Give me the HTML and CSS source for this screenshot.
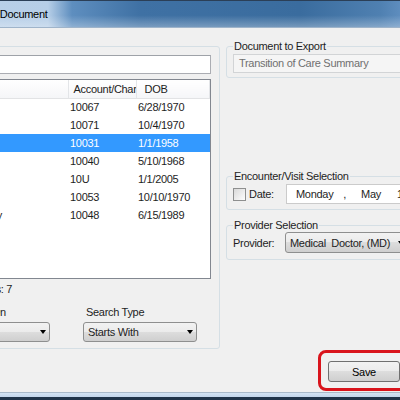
FILE: index.html
```html
<!DOCTYPE html>
<html lang="en">

<head>
    <meta charset="UTF-8" />
    <title>Export Document</title>
    <link rel="stylesheet" href="styles.css">
</head>

<body>
    <div class="window">
        <div class="titlebar"><span class="title">Export Document</span></div>

        <div class="dialog">
            <fieldset class="group search-group">
                <legend>Patient Search</legend>
                <input class="search-box" type="text" value="" />
                <div class="listview">
                    <table>
                        <colgroup>
                            <col class="c-name">
                            <col class="c-acct">
                            <col class="c-dob">
                        </colgroup>
                        <thead>
                            <tr>
                                <th class="h-name">Patient Name</th>
                                <th class="h-acct">Account/Chart #</th>
                                <th class="h-dob">DOB</th>
                            </tr>
                        </thead>
                        <tbody>
                            <tr><td class="name">Smith, John</td><td>10067</td><td>6/28/1970</td></tr>
                            <tr><td class="name">Miller, Jo</td><td>10071</td><td>10/4/1970</td></tr>
                            <tr class="selected"><td class="name">Test, Patient</td><td>10031</td><td>1/1/1958</td></tr>
                            <tr><td class="name">Brown, Mary</td><td>10040</td><td>5/10/1968</td></tr>
                            <tr><td class="name">Baby, Boy</td><td>10U</td><td>1/1/2005</td></tr>
                            <tr><td class="name">Green, Tom</td><td>10053</td><td>10/10/1970</td></tr>
                            <tr><td class="name">Anderson, Nancy</td><td>10048</td><td>6/15/1989</td></tr>
                        </tbody>
                    </table>
                </div>
                <div class="records">Records: 7</div>
                <div class="search-row">
                    <div class="field field-on">
                        <label>Search On</label>
                        <div class="combo"><span>Name</span><span class="arrow"></span></div>
                    </div>
                    <div class="field field-type">
                        <label>Search Type</label>
                        <div class="combo"><span>Starts With</span><span class="arrow"></span></div>
                    </div>
                </div>
            </fieldset>

            <div class="side">
                <fieldset class="group doc-group">
                    <legend>Document to Export</legend>
                    <div class="textbox">Transition of Care Summary</div>
                </fieldset>

                <fieldset class="group enc-group">
                    <legend>Encounter/Visit Selection</legend>
                    <div class="row">
                        <span class="check"></span>
                        <span class="lbl date-lbl">Date:</span>
                        <div class="datebox">
                            <span>Monday</span><span class="sep">,</span><span class="month">May</span><span class="day">13, 2013</span>
                        </div>
                    </div>
                </fieldset>

                <fieldset class="group prov-group">
                    <legend>Provider Selection</legend>
                    <div class="row">
                        <span class="lbl prov-lbl">Provider:</span>
                        <div class="combo wide"><span>Medical&nbsp; Doctor, (MD)</span><span class="arrow"></span></div>
                    </div>
                </fieldset>
            </div>
        </div>

        <div class="footer">
            <div class="highlight">
                <button class="btn">Save</button>
            </div>
        </div>
        <div class="frame-bottom"></div>
    </div>
</body>

</html>
```

FILE: styles.css
```css
* {
    margin: 0px;
    padding: 0px;
    box-sizing: border-box;
}

html,
body {
    width: 400px;
    height: 400px;
    overflow: hidden;
}

body {
    background: #f0f0f0;
    font-family: "Liberation Sans", Arial, sans-serif;
    font-size: 11px;
    letter-spacing: -0.3px;
    color: #1e1e1e;
}

/* the dialog is wider than the shot, its left part is cut off */
.window {
    width: 520px;
    height: 400px;
    margin-left: -100px;
    display: flex;
    flex-direction: column;
}

.titlebar {
    height: 28px;
    flex-shrink: 0;
    display: flex;
    align-items: center;
    padding-left: 67px;
    border-top: 1px solid #2b3f57;
    border-bottom: 1px solid #9fb4ca;
    background-image:
        linear-gradient(180deg, rgba(255, 255, 255, 0) 55%, rgba(255, 255, 255, 0.3) 100%),
        linear-gradient(90deg, #bcd2ea 0, #b6cee7 148px, #5e8ebf 172px, #3f71a4 240px, #3a6c9e 400px, #4f80b1 480px, #6d9acb 520px);
}

.title {
    color: #000;
}

.dialog {
    display: flex;
    gap: 6px;
    padding: 12px 0 0 6px;
}

.group {
    border: 1px solid #d5dfe5;
    border-radius: 3px;
    padding: 0 6px;
}

.group legend {
    padding: 0 1px;
    line-height: 13px;
}

.search-group {
    width: 314px;
    height: 309px;
    flex-shrink: 0;
    padding: 2px 8px 0;
}

.search-box {
    display: block;
    width: 100%;
    height: 19px;
    border: 1px solid #abadb3;
    border-top-color: #9ea2a8;
    background: #fff;
}

.listview {
    margin-top: 5px;
    height: 200px;
    border: 1px solid #828790;
    background: #fff;
    overflow: hidden;
}

.listview table {
    width: 100%;
    border-collapse: collapse;
    table-layout: fixed;
}

.c-name {
    width: 152px;
}

.c-acct {
    width: 68px;
}

.listview th {
    height: 18px;
    font-weight: normal;
    text-align: left;
    color: #222;
    white-space: nowrap;
    overflow: hidden;
    background: linear-gradient(#ffffff, #f5f6f8);
    border-right: 1px solid #e3e5e8;
    border-bottom: 1px solid #e2e3e5;
}

.h-name {
    padding-left: 6px;
}

.h-acct {
    padding-left: 5px;
}

.h-dob {
    padding-left: 8px;
}

.listview td {
    height: 18px;
    padding-left: 2px;
    white-space: nowrap;
    overflow: hidden;
}

.listview td.name {
    padding-left: 6px;
}

.listview tr.selected td {
    background: #3399ff;
    color: #fff;
}

.records {
    margin-top: 4px;
    padding-left: 47px;
    line-height: 13px;
}

.search-row {
    display: flex;
    margin-top: 10px;
}

.field label {
    display: block;
    line-height: 13px;
    padding-left: 3px;
}

.field .combo {
    margin-top: 3px;
}

.field-on {
    width: 97px;
    margin-left: 38px;
}

.field-type {
    width: 114px;
    margin-left: 33px;
}

.combo {
    height: 20px;
    display: flex;
    align-items: center;
    justify-content: space-between;
    padding: 0 3px 0 4px;
    border: 1px solid #8e8f8f;
    border-radius: 3px;
    background: linear-gradient(#f2f2f2 0, #ebebeb 50%, #dddddd 50%, #cfcfcf 100%);
    white-space: nowrap;
    overflow: hidden;
}

.arrow {
    flex-shrink: 0;
    width: 0;
    height: 0;
    border-top: 4px solid #000;
    border-left: 3.5px solid transparent;
    border-right: 3.5px solid transparent;
}

.side {
    width: 189px;
    display: flex;
    flex-direction: column;
}

.doc-group {
    padding: 1px 6px 4px;
}

.textbox {
    height: 19px;
    line-height: 17px;
    padding-left: 5px;
    border: 1px solid #d2d4d6;
    background: #f5f5f5;
    color: #707070;
    white-space: nowrap;
    overflow: hidden;
}

.enc-group {
    margin-top: 92px;
    padding: 1px 6px 5px;
}

.prov-group {
    margin-top: 9px;
    padding: 0 6px 6px;
}

.row {
    display: flex;
    align-items: center;
}

.check {
    width: 13px;
    height: 13px;
    flex-shrink: 0;
    margin-right: 3px;
    border: 1px solid #8e8f8f;
    background: linear-gradient(135deg, #d9d9d9, #fdfdfd);
}

.date-lbl {
    width: 37px;
    flex-shrink: 0;
}

.prov-lbl {
    width: 52px;
    flex-shrink: 0;
}

.datebox {
    flex: 1;
    height: 20px;
    display: flex;
    align-items: center;
    padding-left: 9px;
    border: 1px solid #cbcbcb;
    background: #fff;
    white-space: nowrap;
    overflow: hidden;
}

.sep {
    margin-left: 10px;
}

.month {
    margin-left: 15px;
}

.day {
    margin-left: 16px;
}

.combo.wide {
    flex: 1;
    height: 21px;
}

.footer {
    display: flex;
    justify-content: flex-end;
    margin-top: 1px;
    padding-right: 10px;
}

/* red annotation around the button */
.highlight {
    border: 3px solid #d9141c;
    border-radius: 8px;
    padding: 8px 7px 6px;
}

.btn {
    display: block;
    width: 72px;
    height: 21px;
    border: 1px solid #707070;
    border-radius: 3px;
    background: linear-gradient(#f2f2f2 0, #ebebeb 50%, #dddddd 50%, #cfcfcf 100%);
    font-family: inherit;
    font-size: 11px;
    letter-spacing: -0.3px;
    color: #000;
}

.frame-bottom {
    margin-top: auto;
    height: 8px;
    flex-shrink: 0;
    background: linear-gradient(#a9b9c9 0, #a9b9c9 1px, #d3e3f3 1px, #c2d5ea 5px, #1f3349 5px);
}
```
